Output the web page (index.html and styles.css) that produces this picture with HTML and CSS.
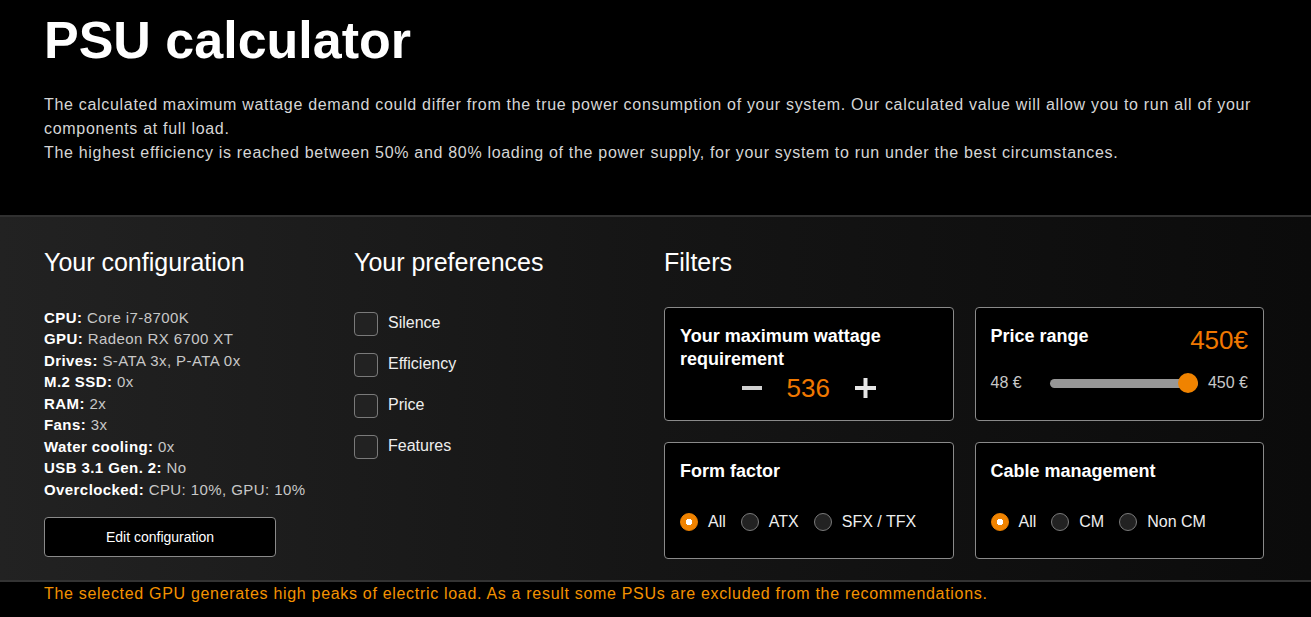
FILE: index.html
```html
<!DOCTYPE html>
<html lang="en">
<head>
<meta charset="utf-8">
<title>PSU calculator</title>
<link rel="stylesheet" href="styles.css">
</head>
<body>
<header class="intro">
  <h1 class="title">PSU calculator</h1>
  <p class="lead">The calculated maximum wattage demand could differ from the true power consumption of your system. Our calculated value will allow you to run all of your<br>components at full load.<br>The highest efficiency is reached between 50% and 80% loading of the power supply, for your system to run under the best circumstances.</p>
</header>

<section class="panel">
  <div class="col">
    <h2 class="heading">Your configuration</h2>
    <ul class="config">
      <li><b>CPU:</b> Core i7-8700K</li>
      <li><b>GPU:</b> Radeon RX 6700 XT</li>
      <li><b>Drives:</b> S-ATA 3x, P-ATA 0x</li>
      <li><b>M.2 SSD:</b> 0x</li>
      <li><b>RAM:</b> 2x</li>
      <li><b>Fans:</b> 3x</li>
      <li><b>Water cooling:</b> 0x</li>
      <li><b>USB 3.1 Gen. 2:</b> No</li>
      <li><b>Overclocked:</b> CPU: 10%, GPU: 10%</li>
    </ul>
    <button class="btn" type="button">Edit configuration</button>
  </div>

  <div class="col">
    <h2 class="heading">Your preferences</h2>
    <div class="prefs">
      <label class="check"><span class="box"></span>Silence</label>
      <label class="check"><span class="box"></span>Efficiency</label>
      <label class="check"><span class="box"></span>Price</label>
      <label class="check"><span class="box"></span>Features</label>
    </div>
  </div>

  <div class="col">
    <h2 class="heading">Filters</h2>
    <div class="cards">
      <div class="card">
        <div class="card-title">Your maximum wattage<br>requirement</div>
        <div class="stepper">
          <svg class="step-icon" width="20" height="20" viewBox="0 0 20 20"><rect x="0" y="8" width="20" height="4" fill="#d0d0d0"/></svg>
          <span class="watt">536</span>
          <svg class="step-icon" width="21" height="20" viewBox="0 0 21 20"><rect x="0" y="8" width="21" height="4" fill="#e6e6e6"/><rect x="8.5" y="0" width="4" height="20" fill="#e6e6e6"/></svg>
        </div>
      </div>

      <div class="card">
        <div class="price-head">
          <div class="card-title">Price range</div>
          <div class="price-val">450€</div>
        </div>
        <div class="slider-row">
          <span class="range-label">48 €</span>
          <div class="slider">
            <div class="track"></div>
            <div class="thumb"></div>
          </div>
          <span class="range-label">450 €</span>
        </div>
      </div>

      <div class="card">
        <div class="card-title">Form factor</div>
        <div class="radios">
          <label class="radio"><span class="dot on"></span>All</label>
          <label class="radio"><span class="dot"></span>ATX</label>
          <label class="radio"><span class="dot"></span>SFX / TFX</label>
        </div>
      </div>

      <div class="card">
        <div class="card-title">Cable management</div>
        <div class="radios">
          <label class="radio"><span class="dot on"></span>All</label>
          <label class="radio"><span class="dot"></span>CM</label>
          <label class="radio"><span class="dot"></span>Non CM</label>
        </div>
      </div>
    </div>
  </div>
</section>

<p class="warning">The selected GPU generates high peaks of electric load. As a result some PSUs are excluded from the recommendations.</p>
</body>
</html>
```

FILE: styles.css
```css
* { box-sizing: border-box; }

html, body {
  margin: 0;
  padding: 0;
  background: #000;
  color: #fff;
  font-family: "Liberation Sans", Arial, sans-serif;
}

body { overflow: hidden; }

.intro {
  padding: 10px 20px 0 44px;
}

.title {
  margin: 0;
  font-size: 52px;
  line-height: 60px;
  font-weight: bold;
  color: #fff;
}

.lead {
  margin: 23px 0 0;
  font-size: 16px;
  line-height: 24px;
  letter-spacing: 0.69px;
  color: #d6d6d6;
  white-space: nowrap;
}

.panel {
  margin-top: 50px;
  display: grid;
  grid-template-columns: 310px 310px 600px;
  padding: 29px 47px 21px 44px;
  border-top: 2px solid #303030;
  border-bottom: 2px solid #333;
  background: linear-gradient(90deg, #222 0%, #151515 50%, #0b0b0b 100%);
}

.heading {
  margin: 0;
  font-size: 25px;
  line-height: 32px;
  font-weight: normal;
  color: #fff;
}

.config {
  list-style: none;
  margin: 29px 0 0;
  padding: 0;
  font-size: 15px;
  line-height: 21.45px;
  letter-spacing: 0.42px;
  color: #c8c8c8;
}

.config b { color: #fff; }

.btn {
  display: block;
  margin-top: 17px;
  width: 232px;
  height: 40px;
  background: #000;
  border: 1px solid #8a8a8a;
  border-radius: 4px;
  color: #fff;
  font-family: "Liberation Sans", Arial, sans-serif;
  font-size: 14px;
}

.prefs {
  margin-top: 33px;
  display: flex;
  flex-direction: column;
  gap: 17px;
}

.check {
  display: flex;
  align-items: center;
  gap: 10px;
  font-size: 16px;
  line-height: 24px;
  color: #eee;
}

.check .box { margin-bottom: -1px; }

.box {
  width: 24px;
  height: 24px;
  border: 1px solid #7a7a7a;
  border-radius: 4px;
  background: #222;
}

.cards {
  margin-top: 29px;
  display: grid;
  grid-template-columns: 1fr 1fr;
  grid-template-rows: 114px 117px;
  gap: 21px;
}

.card {
  background: #000;
  border: 1px solid #8a8a8a;
  border-radius: 4px;
  padding: 17px 15px 0 15px;
}

.card-title {
  font-size: 18px;
  line-height: 23px;
  font-weight: bold;
  color: #fff;
}

.stepper {
  display: flex;
  justify-content: center;
  align-items: center;
  gap: 25px;
  height: 34px;
}

.watt {
  font-size: 26px;
  line-height: 34px;
  color: #f07800;
}

.price-head {
  display: flex;
  justify-content: space-between;
  align-items: flex-start;
}

.price-val {
  font-size: 26px;
  line-height: 30px;
  color: #f07800;
}

.slider-row {
  margin-top: 18px;
  display: flex;
  align-items: center;
  height: 20px;
}

.range-label {
  font-size: 16px;
  color: #c8c8c8;
}

.slider {
  position: relative;
  flex: 1;
  height: 20px;
  margin: 0 10px 0 28px;
  display: flex;
  align-items: center;
}

.track {
  width: 100%;
  height: 9px;
  border-radius: 5px;
  background: #979797;
}

.thumb {
  position: absolute;
  right: 0;
  top: 0;
  width: 20px;
  height: 20px;
  border-radius: 50%;
  background: #f08300;
}

.radios {
  margin-top: 29px;
  display: flex;
  align-items: center;
  gap: 15px;
}

.radio {
  display: flex;
  align-items: center;
  gap: 10px;
  font-size: 16px;
  line-height: 20px;
  color: #eee;
}

.dot {
  width: 18px;
  height: 18px;
  border-radius: 50%;
  border: 1px solid #7a7a7a;
  background: #222;
}

.dot.on {
  border-color: #f08300;
  background: radial-gradient(circle, #fff 0 3px, #f08300 3.5px);
}

.warning {
  margin: 0;
  padding-left: 44px;
  font-size: 16px;
  line-height: 24px;
  letter-spacing: 0.69px;
  color: #f39200;
}
```
